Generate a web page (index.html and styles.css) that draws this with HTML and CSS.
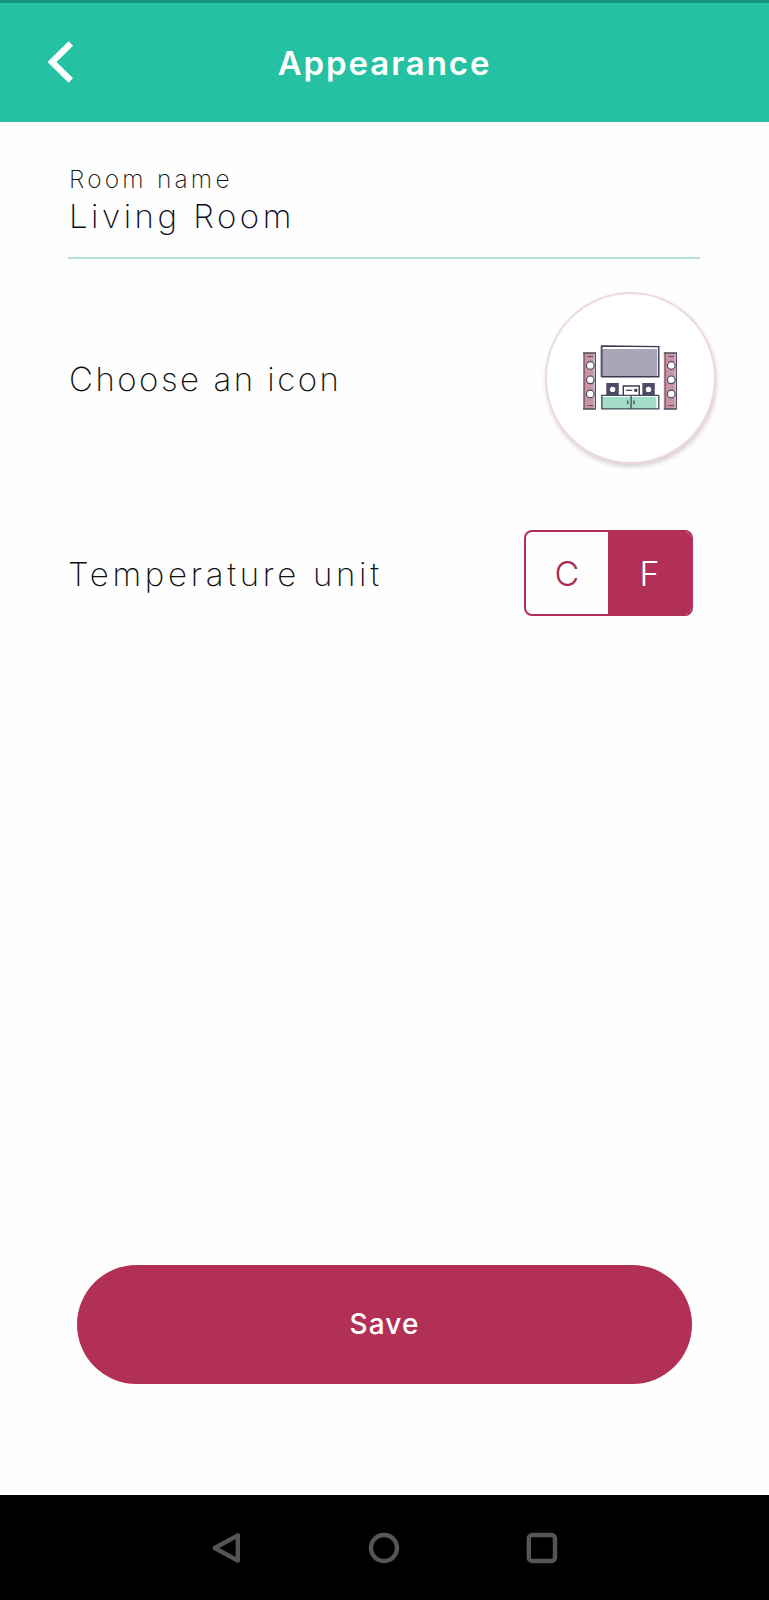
FILE: index.html
```html
<!DOCTYPE html>
<html lang="en">
<head>
  <meta charset="UTF-8">
  <meta name="viewport" content="width=device-width, initial-scale=1.0">
  <title>Appearance</title>
  <link rel="stylesheet" href="styles.css">
</head>
<body>
  <header class="topbar">
    <button class="back" aria-label="Back">
      <svg width="27" height="43" viewBox="0 0 27 43" fill="none" stroke="#fff" stroke-width="6.4">
        <path d="M23.8 2.4 L5 21 L23.8 39.6"/>
      </svg>
    </button>
    <h1>Appearance</h1>
  </header>

  <main>
    <div class="field">
      <div class="field-label">Room name</div>
      <div class="field-value">Living Room</div>
    </div>

    <div class="row icon-row">
      <span class="row-label choose">Choose an icon</span>
      <button class="room-icon" aria-label="Living room icon">
        <svg width="96" height="66" viewBox="0.7 0 96 66">
          <!-- speakers -->
          <g id="speaker">
            <rect x="0.5" y="8" width="11" height="56" fill="#c995a4"/>
            <path d="M2 8 V64" stroke="#8f6478" stroke-width="1.6"/>
            <path d="M0.5 8 H13 V64 H0.5" fill="none" stroke="#4c4860" stroke-width="1.3"/>
            <path d="M5 11.5 H11 M5 60.5 H11" stroke="#6d4a60" stroke-width="1.1"/>
            <g fill="#fff" stroke="#4c4860" stroke-width="1.2">
              <circle cx="8" cy="20.5" r="3.8"/>
              <circle cx="8" cy="34.8" r="3.8"/>
              <circle cx="8" cy="49" r="3.8"/>
            </g>
          </g>
          <use href="#speaker" x="81"/>
          <!-- tv -->
          <rect x="19" y="4" width="56" height="28" fill="#a8a6b7"/>
          <path d="M19.5 1 L76.5 1.6 V31.8 H19.5 Z" fill="none" stroke="#3b394f" stroke-width="1.4"/>
          <path d="M19 1 V32" stroke="#5b596f" stroke-width="1.4"/>
          <!-- small speakers and player -->
          <rect x="24" y="38" width="12.5" height="12" fill="#4d4b66"/>
          <rect x="60" y="38" width="12.5" height="12" fill="#4d4b66"/>
          <circle cx="30.3" cy="44.4" r="2.7" fill="#fff"/>
          <circle cx="66.2" cy="44.4" r="2.7" fill="#fff"/>
          <path d="M41 50 V41 H57 V50" fill="#fff" stroke="#3b394f" stroke-width="1.4"/>
          <path d="M43.5 45.3 H50" stroke="#3b394f" stroke-width="1.2"/>
          <rect x="52" y="43.8" width="3" height="3" fill="#3b394f"/>
          <!-- cabinet -->
          <rect x="19" y="52" width="55" height="12" fill="#a3dcc8"/>
          <path d="M19.5 50.3 H76.5 V63.8 H19.5 Z M48.8 50.3 V63.8" fill="none" stroke="#3b4f58" stroke-width="1.3"/>
          <path d="M45.4 55.5 V59.2 M51.7 55.5 V59.2" stroke="#3b4f58" stroke-width="1.3"/>
        </svg>
      </button>
    </div>

    <div class="row unit-row">
      <span class="row-label unit">Temperature unit</span>
      <div class="toggle">
        <button class="option">C</button>
        <button class="option active">F</button>
      </div>
    </div>

    <button class="save">Save</button>
  </main>

  <nav class="navbar">
    <svg width="32" height="32" viewBox="0 0 32 32">
      <path d="M27.8 3.4 V28.6 L4.8 16 Z"/>
    </svg>
    <svg width="32" height="32" viewBox="0 0 32 32">
      <circle cx="16" cy="16" r="13"/>
    </svg>
    <svg width="32" height="32" viewBox="0 0 32 32">
      <rect x="2.8" y="3" width="26.2" height="26" rx="3.2"/>
    </svg>
  </nav>
</body>
</html>
```

FILE: styles.css
```css
* { box-sizing: border-box; margin: 0; padding: 0; }
body {
  font-family: Inter, 'Open Sans', sans-serif;
  background: #fefefe;
  color: #111;
  width: 769px;
  height: 1600px;
  display: flex;
  flex-direction: column;
  overflow: hidden;
}
button {
  font-family: inherit;
  border: none;
  background: none;
  cursor: pointer;
}
.topbar {
  height: 122px;
  border-top: 3px solid #19927b;
  background: #25c1a3;
  display: grid;
  grid-template-columns: 122px 1fr 122px;
  align-items: center;
}
.back {
  padding-left: 47px;
  height: 43px;
  text-align: left;
}
.back svg {
  display: block;
}
h1 {
  color: #fff;
  font-size: 33px;
  font-weight: 600;
  line-height: 40px;
  letter-spacing: 1.9px;
  text-align: center;
  padding-top: 1px;
}
main {
  flex: 1;
  display: flex;
  flex-direction: column;
  padding: 42px 69px 0 68px;
}
.field {
  height: 95px;
  border-bottom: 2px solid #b5e2d9;
}
.field-label {
  font-size: 24.5px;
  font-weight: 200;
  line-height: 30px;
  letter-spacing: 3.2px;
  padding-left: 1px;
}
.field-value {
  color: #0c0b24;
  font-size: 33px;
  font-weight: 200;
  line-height: 40px;
  letter-spacing: 3.5px;
  margin-top: 2px;
  padding-left: 1px;
}
.row {
  display: flex;
  justify-content: space-between;
  align-items: center;
}
.row-label {
  font-size: 33px;
  font-weight: 200;
  line-height: 40px;
  padding-top: 2px;
}
.icon-row {
  margin-top: 33px;
  margin-right: -16px;
}
.choose {
  letter-spacing: 2.5px;
  padding-left: 1px;
}
.unit {
  letter-spacing: 3.7px;
}
.room-icon {
  width: 171px;
  height: 172px;
  border: 2px solid #ecd9df;
  border-radius: 50%;
  background: #fff;
  box-shadow: 1px 3px 4px rgba(90, 50, 65, 0.22);
  display: flex;
  justify-content: center;
  align-items: center;
}
.unit-row {
  margin-top: 66px;
  margin-right: 7px;
}
.toggle {
  width: 169px;
  height: 86px;
  border: 2px solid #b23056;
  border-radius: 8px;
  display: flex;
  overflow: hidden;
}
.option {
  width: 82px;
  color: #a82b52;
  font-size: 34px;
  font-weight: 300;
}
.option.active {
  flex: 1;
  background: #b23056;
  color: #fff;
}
.save {
  width: 615px;
  height: 119px;
  margin: auto 0 111px 9px;
  padding-bottom: 1px;
  border-radius: 60px;
  background: #b23056;
  color: #fff;
  font-size: 28px;
  font-weight: 500;
  letter-spacing: 1.1px;
}
.navbar {
  height: 105px;
  background: #000;
  display: flex;
  justify-content: center;
  align-items: center;
  gap: 126px;
  padding-right: 1px;
}
.navbar svg {
  fill: none;
  stroke: #555;
  stroke-width: 4.4;
  stroke-linejoin: round;
}
```
